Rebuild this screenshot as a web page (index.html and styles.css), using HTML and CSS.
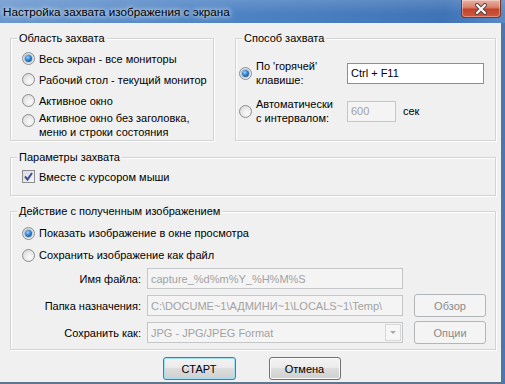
FILE: index.html
```html
<!DOCTYPE html>
<html lang="ru">
<head>
    <meta charset="UTF-8">
    <title>Настройка захвата изображения с экрана</title>
    <link rel="stylesheet" href="styles.css">
</head>
<body>
    <div class="window">
        <div class="titlebar">
            <span class="title">Настройка захвата изображения с экрана</span>
            <span class="close">
                <svg width="14" height="12" viewBox="0 0 14 12">
                    <path d="M3 2 L11 10 M11 2 L3 10" stroke="#5a4a48" stroke-width="4" stroke-linecap="round"/>
                    <path d="M3 2 L11 10 M11 2 L3 10" stroke="#fff" stroke-width="2" stroke-linecap="round"/>
                </svg>
            </span>
        </div>

        <div class="client">
            <div class="top-row">
                <!-- Область захвата -->
                <fieldset class="group">
                    <legend>Область захвата</legend>
                    <div class="group-body area">
                        <label class="opt"><span class="radio on"></span>Весь экран - все мониторы</label>
                        <label class="opt"><span class="radio"></span>Рабочий стол - текущий монитор</label>
                        <label class="opt"><span class="radio"></span>Активное окно</label>
                        <label class="opt multi top"><span class="radio"></span><span>Активное окно без заголовка,<br>меню и строки состояния</span></label>
                    </div>
                </fieldset>

                <!-- Способ захвата -->
                <fieldset class="group">
                    <legend>Способ захвата</legend>
                    <div class="group-body method">
                        <div class="method-row">
                            <label class="opt multi method-label"><span class="radio on"></span><span>По 'горячей'<br>клавише:</span></label>
                            <input class="field hotkey" type="text" value="Ctrl + F11">
                        </div>
                        <div class="method-row">
                            <label class="opt multi method-label"><span class="radio"></span><span>Автоматически<br>с интервалом:</span></label>
                            <input class="field off interval" type="text" value="600" disabled>
                            <span class="unit">сек</span>
                        </div>
                    </div>
                </fieldset>
            </div>

            <!-- Параметры захвата -->
            <fieldset class="group params">
                <legend>Параметры захвата</legend>
                <div class="group-body">
                    <label class="opt">
                        <span class="check">
                            <svg width="11" height="11" viewBox="0 0 11 11">
                                <path d="M2 5.5 L4.5 8.5 L9 2" fill="none" stroke="#3b4f96" stroke-width="2"/>
                            </svg>
                        </span>Вместе с курсором мыши
                    </label>
                </div>
            </fieldset>

            <!-- Действие с полученным изображением -->
            <fieldset class="group action">
                <legend>Действие с полученным изображением</legend>
                <div class="group-body">
                    <label class="opt tall"><span class="radio on"></span>Показать изображение в окне просмотра</label>
                    <label class="opt tall"><span class="radio"></span>Сохранить изображение как файл</label>

                    <div class="file-grid">
                        <span class="file-label">Имя файла:</span>
                        <input class="field off" type="text" value="capture_%d%m%Y_%H%M%S" disabled>
                        <span></span>

                        <span class="file-label">Папка назначения:</span>
                        <input class="field off" type="text" value="C:\DOCUME~1\АДМИНИ~1\LOCALS~1\Temp\" disabled>
                        <button class="btn side" disabled>Обзор</button>

                        <span class="file-label">Сохранить как:</span>
                        <div class="field off select">
                            <span>JPG - JPG/JPEG Format</span>
                            <span class="arrow"></span>
                        </div>
                        <button class="btn side" disabled>Опции</button>
                    </div>
                </div>
            </fieldset>

            <div class="actions">
                <button class="btn default">СТАРТ</button>
                <button class="btn">Отмена</button>
            </div>
        </div>
    </div>
</body>
</html>
```

FILE: styles.css
```css
* {
    box-sizing: border-box;
}
body {
    margin: 0;
    background: #f0f0f0;
    font-family: "Liberation Sans", Arial, sans-serif;
    font-size: 11px;
    color: #000;
}
.window {
    width: 505px;
    height: 384px;
    display: flex;
    flex-direction: column;
    overflow: hidden;
}

/* title bar */
.titlebar {
    height: 23px;
    flex: none;
    display: flex;
    align-items: flex-start;
    justify-content: space-between;
    background:
        linear-gradient(rgba(255, 255, 255, 0.14), rgba(255, 255, 255, 0) 60%),
        linear-gradient(90deg, #6a98cf 0%, #5287c6 35%, #4479bb 75%, #3f73b6 88%, #5a8ac5 100%);
}
.title {
    font-size: 11.7px;
    line-height: 23px;
    padding-left: 3px;
    text-shadow: 0 0 4px rgba(255, 255, 255, 0.95), 0 0 8px rgba(255, 255, 255, 0.7);
}
.close {
    width: 40px;
    height: 18px;
    margin-right: 4px;
    border: 1px solid #7a3428;
    border-top: none;
    border-radius: 0 0 4px 4px;
    background: linear-gradient(#eab0a2 0%, #d98370 42%, #c2432b 55%, #d0583c 100%);
    box-shadow: inset 0 0 0 1px rgba(255, 255, 255, 0.35);
    display: flex;
    align-items: center;
    justify-content: center;
}

/* dialog body */
.client {
    flex: 1;
    padding: 8px 5px 0 10px;
    border-right: 4px solid #4a78ad;
    border-bottom: 2px solid #60758c;
}
.top-row {
    display: grid;
    grid-template-columns: 204px 1fr;
    column-gap: 21px;
}
.group {
    margin: 0;
    padding: 0;
    min-width: 0;
    border: 1px solid #d3d3d3;
    box-shadow: inset 1px 1px 0 #fff, 1px 1px 0 #fff;
}
.group.params {
    margin-top: 9px;
}
.group.action {
    margin-top: 8px;
}
legend {
    margin-left: 6px;
    padding: 0 2px;
    line-height: 14px;
    background: #f0f0f0;
}
.group-body {
    padding: 2px 0 8px 11px;
}
.group-body.area {
    padding: 3px 4px 1px 11px;
}
.group-body.method {
    padding: 14px 0 0 3px;
    display: flex;
    flex-direction: column;
    row-gap: 10px;
}
.action .group-body {
    padding: 4px 0 5px 11px;
}

/* radio / checkbox rows */
.opt {
    display: flex;
    align-items: center;
    column-gap: 4px;
    height: 21px;
    white-space: nowrap;
}
.opt.multi {
    height: 28px;
    line-height: 14px;
}
.opt.top {
    align-items: flex-start;
}
.opt.top .radio {
    margin-top: 3px;
}
.opt.tall {
    height: 22px;
}
.radio {
    flex: none;
    width: 13px;
    height: 13px;
    border-radius: 50%;
    border: 1px solid #8b8d8f;
    background: radial-gradient(circle at 62% 65%, #fafafa 0, #f0f0f0 30%, #d3d3d3 100%);
    display: flex;
    align-items: center;
    justify-content: center;
}
.radio.on::after {
    content: "";
    width: 7px;
    height: 7px;
    border-radius: 50%;
    background: radial-gradient(circle at 40% 35%, #9ad6ff 0, #2f7fc8 45%, #0d3d70 100%);
    box-shadow: 0 0 0 1px rgba(60, 130, 200, 0.35);
}
.check {
    flex: none;
    width: 13px;
    height: 13px;
    border: 1px solid #8b8d8f;
    background: linear-gradient(135deg, #d8dbe2, #f6f7f9);
    display: flex;
    align-items: center;
    justify-content: center;
}

/* text fields */
.field {
    height: 21px;
    margin: 0;
    padding: 0 3px;
    border: 1px solid #8d8f92;
    background: #fff;
    font: inherit;
    color: #000;
    outline: none;
}
.field.off {
    border-color: #c4c6c8;
    background: #f4f4f4;
    color: #a2a2a2;
}
.method-row {
    display: flex;
    align-items: center;
}
.method-label {
    width: 108px;
}
.hotkey {
    width: 137px;
}
.interval {
    width: 49px;
}
.unit {
    margin-left: 7px;
}

.file-grid {
    margin-top: 1px;
    display: grid;
    grid-template-columns: 120px 256px 78px;
    grid-auto-rows: 23px;
    row-gap: 4px;
    column-gap: 5px;
    align-items: center;
}
.file-label {
    text-align: right;
    padding-right: 1px;
}
.select {
    display: flex;
    align-items: center;
    justify-content: space-between;
    padding-right: 1px;
}
.arrow {
    width: 16px;
    height: 17px;
    border: 1px solid #d6d7d9;
    background: #f6f6f6;
    display: flex;
    align-items: center;
    justify-content: center;
}
.arrow::after {
    content: "";
    border-left: 3px solid transparent;
    border-right: 3px solid transparent;
    border-top: 3px solid #a9a9a9;
}

/* buttons */
.btn {
    width: 72px;
    height: 23px;
    padding: 0;
    border: 1px solid #707070;
    border-radius: 3px;
    background: linear-gradient(#f3f3f3 0%, #ebebeb 45%, #dddddd 50%, #cfcfcf 100%);
    box-shadow: inset 0 0 0 1px #fbfbfb;
    font: inherit;
    color: #000;
}
.btn.default {
    width: 73px;
    border-color: #3c7fb1;
    box-shadow: inset 0 0 0 1px #9fe0f6;
}
.btn:disabled {
    border-color: #b3b6b8;
    background: #f4f4f4;
    box-shadow: none;
    color: #8a8a8a;
}
.btn.side {
    margin-left: 6px;
}
.actions {
    margin-top: 7px;
    display: flex;
    justify-content: center;
    column-gap: 33px;
    padding-right: 3px;
}
```
